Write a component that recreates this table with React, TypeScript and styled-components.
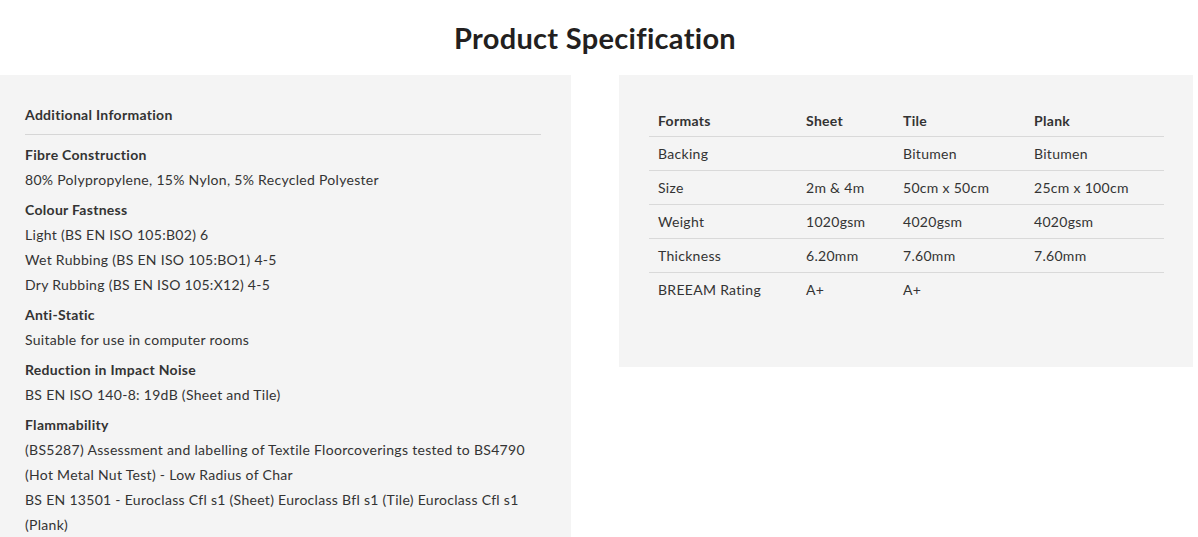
import React from "react";
import styled, { createGlobalStyle } from "styled-components";

const Global = createGlobalStyle`
  html, body { margin: 0; padding: 0; background: #ffffff; }
  body { font-family: Lato, "Open Sans", sans-serif; color: #333333; }
  * { box-sizing: border-box; }
`;

const Page = styled.div`
  width: 1198px;
  height: 537px;
  overflow: hidden;
`;

const Title = styled.h1`
  margin: 0;
  height: 75px;
  display: flex;
  align-items: center;
  justify-content: center;
  padding-right: 8px;
  font-size: 29px;
  font-weight: 700;
  color: #231f20;
  letter-spacing: 0.3px;
`;

const Columns = styled.div`
  display: grid;
  grid-template-columns: 571px 574px;
  column-gap: 48px;
  align-items: start;
`;

const Panel = styled.section<{ $pad: string }>`
  background: #f4f4f4;
  padding: ${(p) => p.$pad};
  letter-spacing: 0.3px;
`;

const InfoHeading = styled.div`
  font-size: 14px;
  font-weight: 700;
  line-height: 25px;
  padding-bottom: 7px;
  border-bottom: 1px solid #d6d6d6;
  margin-bottom: 7px;
`;

const Section = styled.div`
  margin-bottom: 5px;
`;

const Label = styled.div`
  font-size: 14px;
  font-weight: 700;
  line-height: 25px;
`;

const Value = styled.div`
  font-size: 14px;
  line-height: 25px;
`;

const Table = styled.table`
  width: 515px;
  border-collapse: collapse;
  font-size: 14px;
`;

const Th = styled.th<{ $w: number }>`
  width: ${(p) => p.$w}px;
  text-align: left;
  font-weight: 700;
  line-height: 31px;
  padding: 0 8px 0 9px;
  border-bottom: 1px solid #d9d9d9;
`;

const Td = styled.td<{ $last?: boolean }>`
  line-height: 33px;
  padding: 0 8px 0 9px;
  border-bottom: ${(p) => (p.$last ? "none" : "1px solid #d9d9d9")};
`;

const info = [
  { label: "Fibre Construction", values: ["80% Polypropylene, 15% Nylon, 5% Recycled Polyester"] },
  {
    label: "Colour Fastness",
    values: [
      "Light (BS EN ISO 105:B02) 6",
      "Wet Rubbing (BS EN ISO 105:BO1) 4-5",
      "Dry Rubbing (BS EN ISO 105:X12) 4-5",
    ],
  },
  { label: "Anti-Static", values: ["Suitable for use in computer rooms"] },
  { label: "Reduction in Impact Noise", values: ["BS EN ISO 140-8: 19dB (Sheet and Tile)"] },
  {
    label: "Flammability",
    values: [
      "(BS5287) Assessment and labelling of Textile Floorcoverings tested to BS4790 (Hot Metal Nut Test) - Low Radius of Char",
      "BS EN 13501 - Euroclass Cfl s1 (Sheet) Euroclass Bfl s1 (Tile) Euroclass Cfl s1 (Plank)",
    ],
  },
];

const headers: [string, number][] = [
  ["Formats", 148],
  ["Sheet", 97],
  ["Tile", 131],
  ["Plank", 139],
];

const rows = [
  ["Backing", "", "Bitumen", "Bitumen"],
  ["Size", "2m & 4m", "50cm x 50cm", "25cm x 100cm"],
  ["Weight", "1020gsm", "4020gsm", "4020gsm"],
  ["Thickness", "6.20mm", "7.60mm", "7.60mm"],
  ["BREEAM Rating", "A+", "A+", ""],
];

export default function App() {
  return (
    <Page>
      <Global />
      <Title>Product Specification</Title>
      <Columns>
        <Panel $pad="27px 30px 30px 25px">
          <InfoHeading>Additional Information</InfoHeading>
          {info.map((s) => (
            <Section key={s.label}>
              <Label>{s.label}</Label>
              {s.values.map((v) => (
                <Value key={v}>{v}</Value>
              ))}
            </Section>
          ))}
        </Panel>
        <Panel $pad="30px 30px 61px 30px">
          <Table>
            <thead>
              <tr>
                {headers.map(([h, w]) => (
                  <Th key={h} $w={w}>
                    {h}
                  </Th>
                ))}
              </tr>
            </thead>
            <tbody>
              {rows.map((r, i) => (
                <tr key={r[0]}>
                  {r.map((c, j) => (
                    <Td key={j} $last={i === rows.length - 1}>
                      {c}
                    </Td>
                  ))}
                </tr>
              ))}
            </tbody>
          </Table>
        </Panel>
      </Columns>
    </Page>
  );
}
